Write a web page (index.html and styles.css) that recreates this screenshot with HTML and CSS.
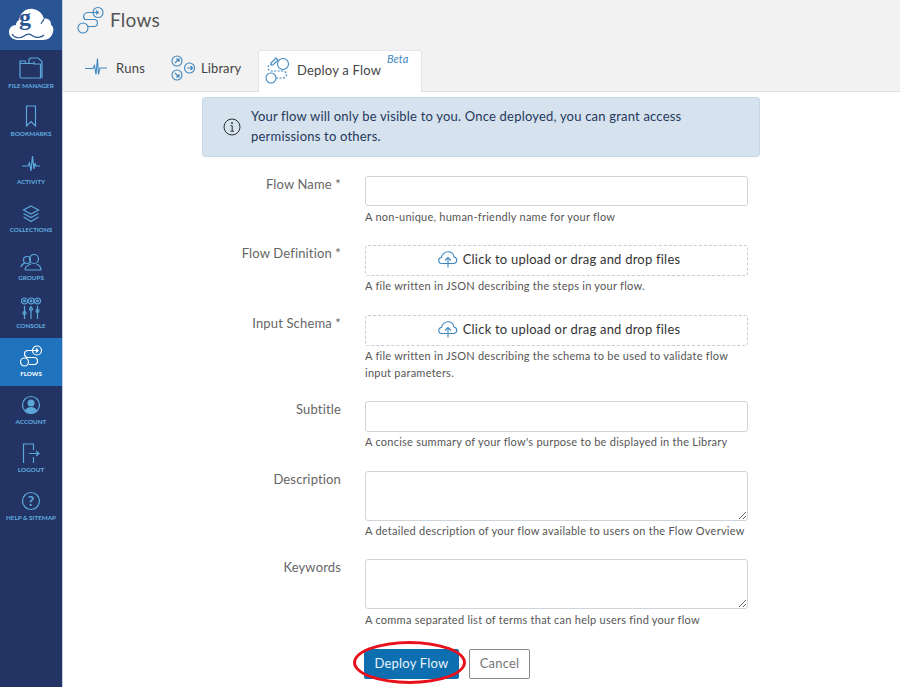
FILE: index.html
```html
<!DOCTYPE html>
<html lang="en">
<head>
<meta charset="utf-8">
<title>Flows</title>
<link rel="stylesheet" href="styles.css">
</head>
<body>
<div class="app">
  <nav class="sidebar">
    <div class="logo">
      <svg width="46" height="44" viewBox="0 -4 46 44"><path fill="#fff" d="M10 33C4 33 1 29 1 25c0-4 3-7 7-7 0-2 1-4 3-5C12 6 18 1 25 2c6 1 10 5 11 10 2-1 5 0 6 2 1 1 1 3 1 4 2 1 3 4 2 7-1 5-5 8-10 8z"/><path fill="none" stroke="#2a5594" stroke-width="1.2" d="M4 27c2 4 8 5 12 2 4-3 6-2 9 0 3 2 8 2 11-1M36 12c-1 2-2 3-3 5"/><text x="17" y="18" class="logo-g">g</text></svg>
    </div>
    <a class="item"><svg width="24" height="22" viewBox="0 0 24 22" class="ic"><path d="M1 6.500h14M1 6.500v13a1.500 1.500 0 0 0 1.500 1.500h19V7H15V4.500M1 6.500V4h5l1 2.500M10 6V2.500L11.500 1H19l4 3.500V21"/></svg><span>FILE MANAGER</span></a>
    <a class="item"><svg width="12" height="22" viewBox="0 0 12 22" class="ic"><path d="M1.500 1h9v20L6 16.500 1.500 21z"/></svg><span>BOOKMARKS</span></a>
    <a class="item"><svg width="18" height="20" viewBox="0 0 18 20" class="ic"><path d="M0 11h6l1.500-3 1.500 8 1.500-15 1.500 13 1-6 1 3h4"/></svg><span>ACTIVITY</span></a>
    <a class="item"><svg width="18" height="18" viewBox="0 0 18 18" class="ic"><path d="M9 1l7.500 4L9 9 1.500 5zM1.500 8.500L9 12.500l7.500-4M1.500 12L9 16.500l7.500-4.500"/></svg><span>COLLECTIONS</span></a>
    <a class="item"><svg width="22" height="18" viewBox="0 0 22 18" class="ic"><circle cx="14" cy="6" r="4.500"/><path d="M5 17c0-3 3-5 6-6M10 17h11c0-3-2-5-4.500-6M5 17h5"/><circle cx="7" cy="7" r="3.500"/><path d="M1 14c0-2 2-3 3.500-4"/></svg><span>GROUPS</span></a>
    <a class="item"><svg width="20" height="22" viewBox="0 0 20 22" class="ic"><circle cx="3.500" cy="4" r="3"/><circle cx="10" cy="4" r="3"/><circle cx="16.500" cy="4" r="3"/><circle cx="3.500" cy="4" r=".8"/><circle cx="10" cy="4" r=".8"/><circle cx="16.500" cy="4" r=".8"/><path d="M3.500 9v13M10 9v13M16.500 9v13"/><circle cx="3.500" cy="16" r="1.500"/><circle cx="10" cy="12" r="1.500"/><circle cx="16.500" cy="14" r="1.500"/></svg><span>CONSOLE</span></a>
    <a class="item active"><svg width="24" height="22" viewBox="0 0 24 22" class="ic"><circle cx="18" cy="5.500" r="4.500"/><path d="M10 5.500h9M17 3.500l2 2-2 2M13.500 5.500H9a3.500 3.500 0 0 0 0 7h6a3 3 0 0 1 0 7H10"/><circle cx="5.500" cy="17" r="4"/></svg><span>FLOWS</span></a>
    <a class="item"><svg width="20" height="20" viewBox="0 0 20 20" class="ic"><circle cx="10" cy="10" r="8.500"/><circle cx="10" cy="8" r="3.500" class="fill"/><path class="fill" d="M4 16c1-3 3-4 6-4s5 1 6 4a8 8 0 0 1-12 0z"/></svg><span>ACCOUNT</span></a>
    <a class="item"><svg width="18" height="20" viewBox="0 0 18 20" class="ic"><path d="M1.500 20V1h10v6M11.500 14v6M7 10.500h10M14 8l3 2.500-3 2.500"/></svg><span>LOGOUT</span></a>
    <a class="item"><svg width="20" height="20" viewBox="0 0 20 20" class="ic"><circle cx="10" cy="10" r="8.500"/><text x="10" y="14.500" class="q">?</text></svg><span>HELP &amp; SITEMAP</span></a>
  </nav>
  <div class="main">
    <header class="top">
      <div class="title">
        <svg width="28" height="28" viewBox="0 0 28 28" class="blue"><circle cx="21" cy="6.500" r="5"/><path d="M11 6.500h10M19 4.500l2.500 2-2.500 2M11 6.500a4 4 0 0 0-3 7h9a3.500 3.500 0 0 1 0 7h-6"/><circle cx="6" cy="22" r="5"/></svg>
        <h1>Flows</h1>
      </div>
      <div class="tabs">
        <a class="tab runs"><svg width="22" height="22" viewBox="0 0 22 22" class="blue"><path d="M0 11.500h8l1.500-3 1.500 9L12.500 1.500l1 16 1.500-6.500h7"/></svg>Runs</a>
        <a class="tab lib"><svg width="24" height="26" viewBox="0 0 24 26" class="blue"><circle cx="6" cy="6" r="5"/><circle cx="6" cy="20" r="5"/><circle cx="18.500" cy="13" r="5"/><path d="M4 8l4-4M5 4h3v3M4 18l4 4M5 22h3v-3M16 13h5M19.500 11l2 2-2 2"/></svg>Library</a>
        <a class="tab current"><svg width="26" height="28" viewBox="0 0 26 28" class="blue"><circle cx="18" cy="8" r="5.500"/><circle cx="6" cy="22" r="5"/><path class="dash" d="M11 22h7a3.500 3.500 0 0 0 0-7H7a3.500 3.500 0 0 1-1-7"/><path d="M6 7l5-5 2 2-5 5H6z"/></svg>Deploy a Flow<em class="beta">Beta</em></a>
      </div>
    </header>
    <div class="content">
      <div class="panel">
        <div class="alert">
          <svg width="18" height="18" viewBox="0 0 18 18" class="info"><circle cx="9" cy="9" r="8"/><circle cx="9" cy="5" r=".6"/><path d="M7.500 7.700H9.200V13M7.500 13.200h3.500"/></svg>
          <p>Your flow will only be visible to you. Once deployed, you can grant access permissions to others.</p>
        </div>
        <form class="form">
          <label class="lbl">Flow Name *</label>
          <div class="field"><input class="ctl" type="text"><small>A non-unique, human-friendly name for your flow</small></div>
          <label class="lbl">Flow Definition *</label>
          <div class="field"><div class="drop"><svg width="20" height="17" viewBox="0 0 20 17" class="blue"><path d="M6 12.500H4a3 3 0 0 1-.5-6C4 3 7 .8 10 .8c3 0 5.500 2 6 5.200a3.300 3.300 0 0 1 0 6.500h-2M10 16.500V7M7 9.500L10 6.500l3 3M6 12.500h8"/></svg>Click to upload or drag and drop files</div><small class="near">A file written in JSON describing the steps in your flow.</small></div>
          <label class="lbl">Input Schema *</label>
          <div class="field tight"><div class="drop"><svg width="20" height="17" viewBox="0 0 20 17" class="blue"><path d="M6 12.500H4a3 3 0 0 1-.5-6C4 3 7 .8 10 .8c3 0 5.500 2 6 5.200a3.300 3.300 0 0 1 0 6.500h-2M10 16.500V7M7 9.500L10 6.500l3 3M6 12.500h8"/></svg>Click to upload or drag and drop files</div><small class="near">A file written in JSON describing the schema to be used to validate flow input parameters.</small></div>
          <label class="lbl">Subtitle</label>
          <div class="field"><input class="ctl tall" type="text"><small class="near">A concise summary of your flow's purpose to be displayed in the Library</small></div>
          <label class="lbl">Description</label>
          <div class="field tight"><textarea class="ctl area"></textarea><small class="near">A detailed description of your flow available to users on the Flow Overview</small></div>
          <label class="lbl">Keywords</label>
          <div class="field tight"><textarea class="ctl area"></textarea><small>A comma separated list of terms that can help users find your flow</small></div>
        </form>
        <div class="actions">
          <button class="btn primary" type="button">Deploy Flow</button>
          <button class="btn ghost" type="button">Cancel</button>
          <span class="ring"></span>
        </div>
      </div>
    </div>
  </div>
</div>
</body>
</html>
```

FILE: styles.css
```css
* { box-sizing: border-box; }
html, body { margin: 0; height: 687px; overflow: hidden; }
body { font-family: "Lato", "Liberation Sans", sans-serif; color: #333; background: #fff; }
.app { display: flex; height: 687px; }

.sidebar { width: 62px; flex: none; background: #233464; display: flex; flex-direction: column; }
.logo { height: 50px; background: #2a5594; display: flex; align-items: center; justify-content: center; }
.logo-g { font-family: "Liberation Serif", serif; font-size: 24px; font-weight: 700; fill: #2a5594; text-anchor: middle; }
.item { height: 48px; display: flex; flex-direction: column; align-items: center; justify-content: flex-end; padding-bottom: 8px; gap: 3px; color: #62aee0; }
.item span { font-size: 6.300px; font-weight: 700; line-height: 8px; white-space: nowrap; }
.item.active { background: #1f73bd; color: #fff; }
.ic { fill: none; stroke: #5ba7da; stroke-width: 1.200; }
.active .ic { stroke: #fff; }
.ic .fill { fill: #5ba7da; stroke: none; }
.q { font-size: 14px; font-weight: 700; text-anchor: middle; fill: #5ba7da; stroke: none; font-family: "Lato", sans-serif; }

.main { flex: 1; min-width: 0; display: flex; flex-direction: column; border-left: 1px solid #c4cedd; }
.top { height: 92px; flex: none; background: #f2f2f2; border-bottom: 1px solid #dde2e8; padding: 5px 0 0 14px; }
.title { display: flex; align-items: center; gap: 5px; height: 30px; }
.title h1 { margin: 0; font-size: 19px; font-weight: 400; color: #555; letter-spacing: .25px; padding-bottom: 1px; }
.blue { fill: none; stroke: #3f87bf; stroke-width: 1.100; flex: none; }
.blue .dash { stroke-dasharray: 2 1.500; }
.tabs { display: flex; align-items: flex-end; margin-top: 11px; height: 45px; }
.tab { display: flex; align-items: center; font-size: 13px; color: #444; height: 41px; letter-spacing: .25px; }
.runs { width: 94px; padding: 0 0 5px 8px; gap: 9px; }
.lib { width: 87px; gap: 6px; padding-bottom: 5px; letter-spacing: .1px; }
.current { width: 164px; background: #fff; border: 1px solid #e4e7eb; border-bottom: 0; border-radius: 3px 3px 0 0; padding: 0 0 4px 6px; gap: 6px; height: 42px; margin-bottom: -1px; letter-spacing: .2px; }
.beta { font-size: 11px; color: #3f87bf; margin: -22px 0 0; letter-spacing: 0; }

.content { flex: 1; padding: 5px 0 0 139px; }
.panel { width: 558px; }
.alert { height: 60px; background: #d6e2ee; border: 1px solid #c9d8e6; border-radius: 3px; display: flex; align-items: center; padding: 0 0 0 20px; gap: 10px; }
.alert p { margin: -1px 0 0; font-size: 13px; line-height: 19.500px; color: #24395c; width: 450px; letter-spacing: .2px; }
.info { fill: none; stroke: #2b2f36; stroke-width: 1; flex: none; }

.form { display: grid; grid-template-columns: 139px 383px; column-gap: 24px; margin-top: 19px; }
.lbl { text-align: right; font-size: 13px; color: #666; line-height: 16px; letter-spacing: .15px; }
.field { padding-bottom: 20px; display: flex; flex-direction: column; }
.field.tight { padding-bottom: 19px; }
.ctl { display: block; width: 383px; height: 30px; border: 1px solid #cfd4da; border-radius: 3px; background: #fff; margin: 0; }
.ctl.tall { height: 31px; }
.ctl.area { height: 50px; }
small { display: block; font-size: 11px; line-height: 17px; color: #555; margin-top: 2px; letter-spacing: .25px; }
small.near { margin: 1px 0; }
.drop { height: 31px; border: 1px dashed #c9cdd2; border-radius: 3px; display: flex; align-items: center; justify-content: center; gap: 5px; padding: 0 0 3px 5px; font-size: 13px; color: #333; letter-spacing: .22px; }

.actions { position: relative; display: flex; gap: 10px; margin: 2px 0 0 162px; }
.btn { height: 30px; border-radius: 2px; font-family: inherit; font-size: 13px; letter-spacing: .2px; padding: 0 0 2px; }
.primary { width: 95px; background: #0e6fb0; color: #e8f2fa; border: 0; }
.ghost { width: 61px; background: #fff; color: #777; border: 1px solid #888; }
.ring { position: absolute; left: -11px; top: -8px; width: 113px; height: 43px; border: 3px solid #e8111b; border-radius: 50%; }
```
